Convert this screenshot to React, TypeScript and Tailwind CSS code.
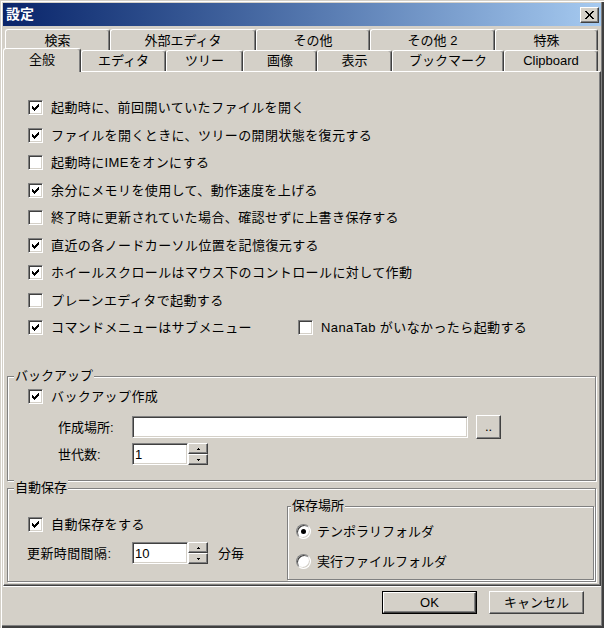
import React from 'react';

const CHECK =
  'M6 0h1v1h-1z M5 1h2v1h-2z M0 2h1v1h-1z M4 2h3v1h-3z M0 3h2v1h-2z M3 3h3v1h-3z M0 4h5v1h-5z M1 5h3v1h-3z M2 6h1v1h-1z';

const CheckBox: React.FC<{ checked?: boolean }> = ({ checked }) => (
  <span className="flex h-[15px] w-[15px] shrink-0 items-center justify-center border border-t-[#808080] border-l-[#808080] border-b-white border-r-white bg-white shadow-[inset_1px_1px_0_#404040,inset_-1px_-1px_0_#d4d0c8]">
    {checked && (
      <svg width="7" height="7" viewBox="0 0 7 7" shapeRendering="crispEdges">
        <path d={CHECK} fill="#000" />
      </svg>
    )}
  </span>
);

const Radio: React.FC<{ checked?: boolean }> = ({ checked }) => (
  <span className="flex h-[15px] w-[15px] shrink-0 items-center justify-center rounded-full border border-t-[#808080] border-l-[#808080] border-b-white border-r-white bg-white shadow-[inset_1px_1px_0_#404040,inset_-1px_-1px_0_#d4d0c8]">
    {checked && <span className="h-[5px] w-[5px] rounded-full bg-black" />}
  </span>
);

const CheckRow: React.FC<{ checked?: boolean; label: string; className?: string }> = ({
  checked,
  label,
  className = '',
}) => (
  <div className={`flex items-center gap-[8px] ${className}`}>
    <CheckBox checked={checked} />
    <span className="whitespace-nowrap tracking-[0.4px]">{label}</span>
  </div>
);

const bevel =
  'border border-t-white border-l-white border-b-[#404040] border-r-[#404040] bg-[#d4d0c8] shadow-[inset_-1px_-1px_0_#808080]';

const TextBox: React.FC<{ className?: string; value?: string }> = ({ className = '', value }) => (
  <div
    className={`flex h-[22px] items-center border border-t-[#808080] border-l-[#808080] border-b-white border-r-white bg-white pl-[2px] shadow-[inset_1px_1px_0_#404040,inset_-1px_-1px_0_#d4d0c8] ${className}`}
  >
    {value}
  </div>
);

const Arrow: React.FC<{ up?: boolean }> = ({ up }) => (
  <svg width="3" height="2" viewBox="0 0 3 2" shapeRendering="crispEdges">
    {up ? (
      <path d="M1 0h1v1h-1z M0 1h3v1h-3z" fill="#000" />
    ) : (
      <path d="M0 0h3v1h-3z M1 1h1v1h-1z" fill="#000" />
    )}
  </svg>
);

const Spinner: React.FC = () => (
  <div className="flex w-[20px] flex-col">
    <div className={`flex h-[11px] items-center justify-center ${bevel}`}>
      <Arrow up />
    </div>
    <div className={`flex h-[11px] items-center justify-center ${bevel}`}>
      <Arrow />
    </div>
  </div>
);

const GroupBox: React.FC<{ label: string; className?: string; labelClass?: string; children?: React.ReactNode }> = ({
  label,
  className = '',
  labelClass = 'left-[6px]',
  children,
}) => (
  <div className={`relative border border-[#808080] shadow-[inset_1px_1px_0_#fff,1px_1px_0_#fff] ${className}`}>
    <span className={`absolute -top-[9px] whitespace-nowrap bg-[#d4d0c8] px-px leading-[15px] ${labelClass}`}>
      {label}
    </span>
    {children}
  </div>
);

const BackTab: React.FC<{ label: string; w: string }> = ({ label, w }) => (
  <div
    className={`flex h-[21px] shrink-0 justify-center rounded-t-[3px] border-l border-t border-r border-l-white border-t-white border-r-[#404040] pt-[3px] leading-[15px] shadow-[inset_-1px_0_0_#808080] ${w}`}
  >
    {label}
  </div>
);

const FrontTab: React.FC<{ label: string; w: string; selected?: boolean }> = ({ label, w, selected }) => (
  <div
    className={`relative flex shrink-0 justify-center rounded-t-[3px] border-l border-t border-r border-l-white border-t-white border-r-[#404040] bg-[#d4d0c8] leading-[15px] shadow-[inset_-1px_0_0_#808080] ${
      selected ? 'z-10 -mt-[2px] h-[24px] pt-[3px]' : 'h-[21px] pt-[2px]'
    } ${w}`}
  >
    {label}
  </div>
);

const rows: { checked: boolean; label: string }[] = [
  { checked: true, label: '起動時に、前回開いていたファイルを開く' },
  { checked: true, label: 'ファイルを開くときに、ツリーの開閉状態を復元する' },
  { checked: false, label: '起動時にIMEをオンにする' },
  { checked: true, label: '余分にメモリを使用して、動作速度を上げる' },
  { checked: false, label: '終了時に更新されていた場合、確認せずに上書き保存する' },
  { checked: true, label: '直近の各ノードカーソル位置を記憶復元する' },
  { checked: true, label: 'ホイールスクロールはマウス下のコントロールに対して作動' },
  { checked: false, label: 'プレーンエディタで起動する' },
];

export default function App() {
  return (
    <div className="flex h-[628px] w-[604px] flex-col bg-[#d4d0c8] p-[3px] text-[13px] leading-[15px] text-black shadow-[inset_1px_1px_0_#d4d0c8,inset_2px_2px_0_#fff,inset_-2px_-2px_0_#404040,inset_-3px_-3px_0_#808080] font-['Liberation_Sans','Noto_Sans_CJK_JP',sans-serif]">
      {/* title bar */}
      <div className="flex h-[23px] shrink-0 items-center justify-between bg-linear-to-r from-[#0a246a] to-[#a6caf0] pl-[3px] pr-[2px]">
        <span className="text-[14px] font-bold text-white">設定</span>
        <div className={`flex h-[16px] w-[19px] items-center justify-center ${bevel}`}>
          <svg width="9" height="8" viewBox="0 0 9 8" shapeRendering="crispEdges">
            <path
              d="M0 0h2v1h-2z M7 0h2v1h-2z M1 1h2v1h-2z M6 1h2v1h-2z M2 2h2v1h-2z M5 2h2v1h-2z M3 3h3v1h-3z M3 4h3v1h-3z M2 5h2v1h-2z M5 5h2v1h-2z M1 6h2v1h-2z M6 6h2v1h-2z M0 7h2v1h-2z M7 7h2v1h-2z"
              fill="#000"
            />
          </svg>
        </div>
      </div>

      {/* tabs */}
      <div className="mt-[3px] flex shrink-0 pl-[2px]">
        <BackTab label="検索" w="w-[105px]" />
        <BackTab label="外部エディタ" w="w-[146px]" />
        <BackTab label="その他" w="w-[114px]" />
        <BackTab label="その他 2" w="w-[125px]" />
        <BackTab label="特殊" w="w-[103px]" />
      </div>
      <div className="flex h-[21px] shrink-0 items-start">
        <FrontTab label="全般" w="w-[78px]" selected />
        <FrontTab label="エディタ" w="w-[85px]" />
        <FrontTab label="ツリー" w="w-[77px]" />
        <FrontTab label="画像" w="w-[74px]" />
        <FrontTab label="表示" w="w-[75px]" />
        <FrontTab label="ブックマーク" w="w-[112px]" />
        <FrontTab label="Clipboard" w="w-[94px]" />
      </div>

      {/* panel */}
      <div className="flex h-[515px] shrink-0 flex-col border border-t-white border-l-white border-b-[#404040] border-r-[#404040] shadow-[inset_-1px_-1px_0_#808080]">
        <div className="flex flex-col pl-[24px] pt-[22px]">
          {rows.map((r) => (
            <CheckRow key={r.label} checked={r.checked} label={r.label} className="h-[27.5px]" />
          ))}
          <div className="flex h-[27.5px] items-center">
            <CheckRow checked label="コマンドメニューはサブメニュー" className="w-[270px]" />
            <CheckRow label="NanaTab がいなかったら起動する" />
          </div>
        </div>

        <GroupBox label="バックアップ" className="ml-[3px] mt-[34.5px] h-[105px] w-[589px]">
          <div className="flex flex-col">
            <CheckRow checked label="バックアップ作成" className="ml-[20px] mt-[12px] h-[15px]" />
            <div className="ml-[50px] mt-[11px] flex h-[24px] items-center">
              <span className="w-[74px]">作成場所:</span>
              <TextBox className="w-[336px]" />
              <div className={`ml-[8px] flex h-[24px] w-[25px] items-center justify-center pb-[2px] ${bevel}`}>..</div>
            </div>
            <div className="ml-[50px] mt-[4px] flex h-[22px] items-center">
              <span className="w-[74px]">世代数:</span>
              <TextBox className="w-[56px]" value="1" />
              <Spinner />
            </div>
          </div>
        </GroupBox>

        <GroupBox label="自動保存" className="ml-[3px] mt-[7px] flex h-[94px] w-[589px]">
          <div className="flex w-[279px] shrink-0 flex-col">
            <CheckRow checked label="自動保存をする" className="ml-[20px] mt-[28px] h-[15px]" />
            <div className="ml-[19px] mt-[10px] flex h-[22px] items-center">
              <span className="w-[105px] tracking-[0.4px]">更新時間間隔:</span>
              <TextBox className="w-[56px]" value="10" />
              <Spinner />
              <span className="ml-[10px]">分毎</span>
            </div>
          </div>
          <GroupBox label="保存場所" labelClass="left-[3px]" className="mt-[17px] h-[74px] w-[307px]">
            <div className="flex flex-col pl-[8px] pt-[9px]">
              <div className="flex h-[30px] items-center gap-[6px]">
                <Radio checked />
                <span>テンポラリフォルダ</span>
              </div>
              <div className="flex h-[30px] items-center gap-[6px]">
                <Radio />
                <span>実行ファイルフォルダ</span>
              </div>
            </div>
          </GroupBox>
        </GroupBox>
      </div>

      {/* buttons */}
      <div className="flex h-[39px] shrink-0 items-start justify-end gap-[12px] border-t border-t-white pr-[17px] pt-[4px]">
        <div className="h-[23px] w-[95px] border border-black">
          <div className={`flex h-full w-full items-center justify-center ${bevel}`}>OK</div>
        </div>
        <div className={`flex h-[23px] w-[95px] items-center justify-center ${bevel}`}>キャンセル</div>
      </div>
    </div>
  );
}
